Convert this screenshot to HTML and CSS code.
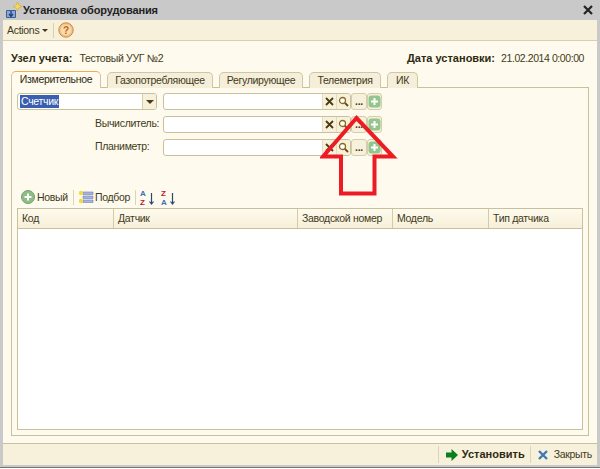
FILE: index.html
```html
<!DOCTYPE html>
<html lang="ru">
<head>
<meta charset="utf-8">
<title>Установка оборудования</title>
<link rel="stylesheet" href="styles.css">
</head>
<body>
<div class="window">
  <div class="titlebar">
    <svg class="title-icon" width="17" height="17" viewBox="0 0 17 17"><path d="M1.500 8.500h9v7h-9z" fill="#8fa6c8" stroke="#3d5f96"/><path d="M6 9v5M4 12l2 2.500 2-2.500" fill="none" stroke="#1d3f86" stroke-width="1.300"/><path d="M12.500 0l1.300 3.200 3.200 1.300-3.200 1.300-1.300 3.200-1.300-3.200-3.200-1.300 3.200-1.300z" fill="#f7dc55" stroke="#c9a22a" stroke-width=".5"/></svg>
    <span class="title-text">Установка оборудования</span>
    <svg class="title-close" width="12" height="12" viewBox="0 0 12 12"><path d="M2 2l8 8M10 2l-8 8" stroke="#222" stroke-width="2.200"/></svg>
  </div>
  <div class="menubar">
    <span class="actions">Actions</span><span class="caret"></span>
    <span class="vsep"></span>
    <svg class="help" width="16" height="16" viewBox="0 0 16 16"><circle cx="8" cy="8" r="7.200" fill="#f5c58a" stroke="#c8873f"/><circle cx="8" cy="8" r="5" fill="#fbdcae"/><text x="8" y="12" text-anchor="middle" class="help-q">?</text></svg>
  </div>
  <div class="content">
    <div class="head">
      <div class="head-group"><b>Узел учета:</b><span>Тестовый УУГ №2</span></div>
      <div class="head-group head-date"><b>Дата установки:</b><span>21.02.2014 0:00:00</span></div>
    </div>
    <div class="tabs">
      <div class="tab tab-active w1">Измерительное</div>
      <div class="tab w2">Газопотребляющее</div>
      <div class="tab w3">Регулирующее</div>
      <div class="tab w4">Телеметрия</div>
      <div class="tab w5">ИК</div>
    </div>
    <div class="panel">
      <div class="form-row">
        <div class="select"><span class="sel-text">Счетчик</span><span class="sel-btn"><i></i></span></div>
        <div class="input"><span class="btn-x"><svg width="9" height="9" viewBox="0 0 9 9"><path d="M1 1l7 7M8 1l-7 7" stroke="#4a3c10" stroke-width="1.800"/></svg></span><span class="btn-s"><svg width="11" height="11" viewBox="0 0 11 11"><circle cx="4.500" cy="4.500" r="3" fill="#fff" stroke="#8a6a20" stroke-width="1.300"/><path d="M7 7l3 3" stroke="#6a4c10" stroke-width="1.800"/></svg></span></div>
        <span class="btn-dots">...</span>
        <span class="btn-plus"><svg width="13" height="13" viewBox="0 0 13 13"><rect x=".5" y=".5" width="12" height="12" rx="3" fill="#93c58c"/><path d="M6.500 3v7M3 6.500h7" stroke="#fff" stroke-width="2"/></svg></span>
      </div>
      <div class="form-row">
        <label class="lbl">Вычислитель:</label>
        <div class="input"><span class="btn-x"><svg width="9" height="9" viewBox="0 0 9 9"><path d="M1 1l7 7M8 1l-7 7" stroke="#4a3c10" stroke-width="1.800"/></svg></span><span class="btn-s"><svg width="11" height="11" viewBox="0 0 11 11"><circle cx="4.500" cy="4.500" r="3" fill="#fff" stroke="#8a6a20" stroke-width="1.300"/><path d="M7 7l3 3" stroke="#6a4c10" stroke-width="1.800"/></svg></span></div>
        <span class="btn-dots">...</span>
        <span class="btn-plus"><svg width="13" height="13" viewBox="0 0 13 13"><rect x=".5" y=".5" width="12" height="12" rx="3" fill="#93c58c"/><path d="M6.500 3v7M3 6.500h7" stroke="#fff" stroke-width="2"/></svg></span>
      </div>
      <div class="form-row">
        <label class="lbl">Планиметр:</label>
        <div class="input"><span class="btn-x"><svg width="9" height="9" viewBox="0 0 9 9"><path d="M1 1l7 7M8 1l-7 7" stroke="#4a3c10" stroke-width="1.800"/></svg></span><span class="btn-s"><svg width="11" height="11" viewBox="0 0 11 11"><circle cx="4.500" cy="4.500" r="3" fill="#fff" stroke="#8a6a20" stroke-width="1.300"/><path d="M7 7l3 3" stroke="#6a4c10" stroke-width="1.800"/></svg></span></div>
        <span class="btn-dots">...</span>
        <span class="btn-plus"><svg width="13" height="13" viewBox="0 0 13 13"><rect x=".5" y=".5" width="12" height="12" rx="3" fill="#93c58c"/><path d="M6.500 3v7M3 6.500h7" stroke="#fff" stroke-width="2"/></svg></span>
      </div>
      <div class="tools">
        <svg width="14" height="14" viewBox="0 0 14 14"><circle cx="7" cy="7" r="6.500" fill="#8cbf84" stroke="#7a9a78"/><path d="M7 3.500v7M3.500 7h7" stroke="#fff" stroke-width="2"/></svg>
        <span class="t-new">Новый</span>
        <span class="vsep-sm"></span>
        <svg class="i-pick" width="16" height="15" viewBox="0 0 16 15"><path d="M5 2h10v2.500H5zM5 6h10v2.500H5zM5 10h10v2.500H5z" fill="#a9b4dc" stroke="#6f7db5" stroke-width=".6"/><circle cx="3" cy="3" r="2.200" fill="#f4dc3c"/><circle cx="3" cy="11" r="2.200" fill="#f4dc3c"/></svg>
        <span class="t-pick">Подбор</span>
        <span class="vsep-sm"></span>
        <svg class="i-az" width="15" height="18" viewBox="0 0 15 18"><text x="0" y="8" class="az-blue">A</text><text x="0" y="17" class="az-red">Z</text><path d="M11.500 5v11M9.500 13.500l2 2.500 2-2.500" fill="none" stroke="#2a4a6a" stroke-width="1.200"/></svg>
        <svg class="i-za" width="15" height="18" viewBox="0 0 15 18"><text x="0" y="8" class="az-red">Z</text><text x="0" y="17" class="az-blue">A</text><path d="M11.500 5v11M9.500 13.500l2 2.500 2-2.500" fill="none" stroke="#2a4a6a" stroke-width="1.200"/></svg>
      </div>
      <div class="table">
        <div class="thead">
          <div class="th c1">Код</div>
          <div class="th c2">Датчик</div>
          <div class="th c3">Заводской номер</div>
          <div class="th c4">Модель</div>
          <div class="th c5">Тип датчика</div>
        </div>
      </div>
    </div>
  </div>
  <div class="footer">
    <span class="vsep-sm"></span>
    <svg class="i-go" width="12" height="12" viewBox="0 0 12 12"><path d="M0 3.500h5.500V0L12 6l-6.500 6V8.500H0z" fill="#0b7f1e"/></svg>
    <b class="f-install">Установить</b>
    <span class="vsep-sm"></span>
    <svg class="i-close" width="10" height="10" viewBox="0 0 10 10"><path d="M1 1l8 8M9 1l-8 8" stroke="#3f78b5" stroke-width="2.400"/></svg>
    <span class="f-close">Закрыть</span>
  </div>
</div>
<svg class="arrow" width="80" height="84" viewBox="0 0 80 84"><path d="M36.500 3L3 41.500H21V78.500H54.500V41.500H73z" fill="none" stroke="#ed1c24" stroke-width="4"/></svg>
</body>
</html>
```
FILE: styles.css
```css
* { box-sizing: border-box; }
html, body { margin: 0; padding: 0; }
body {
  width: 600px; height: 469px; background: #fff; position: relative; overflow: hidden;
  font: 10.500px/13px "Liberation Sans", Tahoma, sans-serif; letter-spacing: -.3px; color: #3f3a20;
}
b { font-size: 11px; letter-spacing: 0; }
.window {
  width: 600px; height: 467px; background: #fefaee;
  border: 3px solid #c9c9c9; border-top: 0; border-bottom-width: 2px;
  box-shadow: 0 1px 0 #77776f;
  display: flex; flex-direction: column;
}
.titlebar {
  height: 20px; flex: none; background: #c9c9c9; margin: 0 -3px; padding: 0 6px 0 5px;
  display: flex; align-items: center;
}
.title-icon { flex: none; }
.title-text { margin-left: 1px; font-weight: bold; font-size: 11px; letter-spacing: -.12px; color: #222; }
.title-close { margin-left: auto; }
.menubar {
  height: 21px; flex: none; background: #f7f1dc; border-bottom: 1px solid #d8d0ac;
  display: flex; align-items: center; padding-left: 4px;
}
.actions { color: #3f3a20; }
.caret { width: 0; height: 0; border: 3px solid transparent; border-top-color: #3f3a20; border-bottom: 0; margin-left: 3px; }
.vsep { width: 1px; height: 15px; background: #d8d0ac; margin: 0 4px 0 5px; }
.help { flex: none; }
.help-q { font: bold 10px "Liberation Sans", sans-serif; fill: #b8691a; }
.content { flex: 1; display: flex; flex-direction: column; padding: 0 8px; min-height: 0; }
.head { height: 30px; flex: none; display: flex; justify-content: space-between; align-items: flex-end; padding-bottom: 6px; padding-right: 5px; }
.head-group { display: flex; gap: 7px; }
.head-group b { color: #2e2a12; }
.head-date { gap: 6px; }
.head-date span { letter-spacing: -.42px; }
.tabs { display: flex; height: 17px; flex: none; gap: 6px; position: relative; z-index: 1; }
.tab {
  height: 16px; margin-top: 1px; background: #f5eeda; border: 1px solid #cfc6a2; border-bottom: 0;
  border-radius: 5px 5px 0 0; text-align: center; line-height: 15px;
}
.tab-active { height: 17px; margin-top: 0; background: #fefaee; border-top-color: #e8b050; color: #2e2a12; }
.w1 { width: 90px; } .w2 { width: 106px; } .w3 { width: 84px; } .w4 { width: 72px; } .w5 { width: 31px; }
.panel {
  height: 349px; flex: none; margin-top: -1px; border: 1px solid #c8c29c; padding: 5px;
  display: flex; flex-direction: column;
}
.form-row { height: 17px; margin-bottom: 6px; display: flex; flex: none; align-items: stretch; }
.select, .input { background: #fff; border: 1px solid #c8c29c; border-radius: 3px; display: flex; }
.select { width: 140px; margin-right: 6px; justify-content: space-between; }
.sel-text { background: #3a5fb0; color: #fff; margin: 1px 0 1px 2px; height: 13px; line-height: 13px; padding: 0 1px; }
.sel-btn { width: 14px; background: #f7f1dc; border-left: 1px solid #d8d0ac; display: flex; align-items: center; justify-content: center; border-radius: 0 2px 2px 0; }
.sel-btn i { width: 0; height: 0; border: 4px solid transparent; border-top-color: #4a3c10; border-bottom: 0; }
.input { width: 188px; justify-content: flex-end; }
.btn-x, .btn-s { width: 14px; background: #f7f1dc; border-left: 1px solid #e4dcbc; display: flex; align-items: center; justify-content: center; }
.btn-s { border-radius: 0 2px 2px 0; }
.btn-dots { width: 16px; background: #f7f1dc; border: 1px solid #d4ccaa; border-radius: 3px; text-align: center; line-height: 15px; font-weight: bold; }
.btn-plus { width: 15px; background: #f7f1dc; border: 1px solid #d4ccaa; border-radius: 3px; display: flex; align-items: center; justify-content: center; }
.lbl { width: 146px; padding-left: 78px; line-height: 15px; white-space: nowrap; }
.tools { height: 18px; margin-top: 26px; flex: none; display: flex; align-items: center; padding-left: 4px; }
.t-new { margin-left: 2px; }
.vsep-sm { width: 1px; height: 15px; background: #dcd4b4; flex: none; }
.tools .vsep-sm { margin: 0 4px 0 5px; }
.i-pick { flex: none; }
.t-pick { margin-left: 1px; }
.i-az { flex: none; }
.i-za { margin-left: 6px; flex: none; }
.az-blue { font: bold 8px "Liberation Sans", sans-serif; fill: #3f6fae; }
.az-red { font: bold 8px "Liberation Sans", sans-serif; fill: #b8202c; }
.table { height: 222px; flex: none; margin-top: 2px; background: #fff; border: 1px solid #c8c29c; }
.thead { display: flex; height: 20px; background: linear-gradient(#fefaee, #f7efd8); border-bottom: 1px solid #c8c29c; }
.th { border-right: 1px solid #d2cba8; padding-left: 4px; line-height: 19px; white-space: nowrap; }
.c1 { width: 96px; } .c2 { width: 184px; } .c3 { width: 95px; } .c4 { width: 96px; }
.c5 { flex: 1; border-right: 0; }
.footer {
  height: 22px; flex: none; background: #f7f1dc; border-top: 1px solid #c8c29c;
  display: flex; align-items: center; justify-content: flex-end; padding-right: 5px;
}
.footer .vsep-sm { height: 17px; }
.i-go { margin-left: 7px; }
.f-install { margin-left: 4px; color: #2e2a12; margin-right: 5px; }
.i-close { margin-left: 7px; }
.f-close { margin-left: 6px; }
.arrow { position: absolute; left: 320px; top: 115px; }
```
